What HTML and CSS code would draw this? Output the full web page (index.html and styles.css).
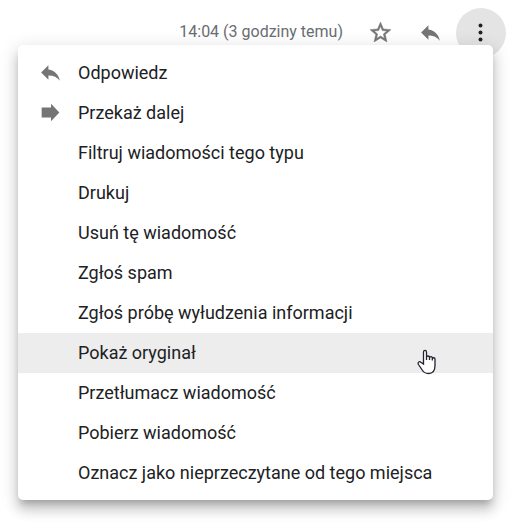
FILE: index.html
```
<!DOCTYPE html>
<html lang="pl">
<head>
  <meta charset="UTF-8">
  <meta name="viewport" content="width=device-width, initial-scale=1.0">
  <title>Wiadomość</title>
  <link rel="stylesheet" href="styles.css">
</head>
<body>
  <div class="message-header">
    <span class="time">14:04 (3 godziny temu)</span>
    <div class="actions">
      <button type="button" class="icon-btn" aria-label="Gwiazdka">
        <svg class="icon star" viewBox="0 0 24 24"><path d="M22 9.24l-7.19-.62L12 2 9.19 8.63 2 9.24l5.46 4.73L5.82 21 12 17.27 18.18 21l-1.63-7.03L22 9.24zM12 15.4l-3.76 2.27 1-4.28-3.32-2.88 4.38-.38L12 6.1l1.71 4.04 4.38.38-3.32 2.88 1 4.28L12 15.4z"/></svg>
      </button>
      <button type="button" class="icon-btn" aria-label="Odpowiedz">
        <svg class="icon" viewBox="0 0 24 24"><path d="M10 9V5l-7 7 7 7v-4.1c5 0 8.5 1.6 11 5.1-1-5-4-10-11-11z"/></svg>
      </button>
      <button type="button" class="icon-btn active" aria-label="Więcej">
        <svg class="icon" viewBox="0 0 24 24"><circle cx="12" cy="5.3" r="1.900"/><circle cx="12" cy="12" r="1.900"/><circle cx="12" cy="18.7" r="1.900"/></svg>
      </button>
    </div>
  </div>

  <div class="menu">
    <button type="button" class="item">
      <svg class="icon" viewBox="0 0 24 24"><path d="M10 9V5l-7 7 7 7v-4.1c5 0 8.5 1.6 11 5.1-1-5-4-10-11-11z"/></svg>
      <span>Odpowiedz</span>
    </button>
    <button type="button" class="item">
      <svg class="icon" viewBox="0 0 24 24"><path d="M3.500 7.300h9V3.500l8 8.500-8 8.500V16.700h-9z"/></svg>
      <span>Przekaż dalej</span>
    </button>
    <button type="button" class="item"><span>Filtruj wiadomości tego typu</span></button>
    <button type="button" class="item"><span>Drukuj</span></button>
    <button type="button" class="item"><span>Usuń tę wiadomość</span></button>
    <button type="button" class="item"><span>Zgłoś spam</span></button>
    <button type="button" class="item"><span>Zgłoś próbę wyłudzenia informacji</span></button>
    <button type="button" class="item hover">
      <span>Pokaż oryginał</span>
      <svg class="cursor" viewBox="0 0 20 26"><path d="M6.500 15V3.200C6.500.8 9.500.8 9.500 3.200V11 8.500c0-2 3-2 3 0V11 9c0-1.800 2.800-1.800 2.800 0v2.500V10c0-1.700 2.700-1.700 2.700 0v6.500c0 5-2.500 8-6.500 8-3 0-4.800-1-6.300-3.500L1.500 15.500c-1.200-2 .8-3.600 2.300-2.300z"/></svg>
    </button>
    <button type="button" class="item"><span>Przetłumacz wiadomość</span></button>
    <button type="button" class="item"><span>Pobierz wiadomość</span></button>
    <button type="button" class="item"><span>Oznacz jako nieprzeczytane od tego miejsca</span></button>
  </div>
</body>
</html>
```
FILE: styles.css
```
body, html {
  margin: 0;
  padding: 0;
  height: 100%;
}
body {
  position: relative;
  overflow: hidden;
  background-color: #fff;
  font-family: Roboto, "Liberation Sans", sans-serif;
  color: #202124;
}
button {
  padding: 0;
  border: none;
  background: none;
  font: inherit;
  color: inherit;
  cursor: pointer;
}
.message-header {
  display: flex;
  justify-content: flex-end;
  align-items: center;
  gap: 13px;
  padding: 8px 7px 0 0;
}
.time {
  padding-bottom: 2px;
  font-size: 16px;
  line-height: 20px;
  color: #6a6d71;
}
.actions {
  display: flex;
}
.icon-btn {
  display: flex;
  justify-content: center;
  align-items: center;
  width: 50px;
  height: 50px;
  padding: 0 2px 2px 0;
  border-radius: 50%;
}
.icon-btn.active {
  background-color: #e4e4e4;
}
.icon {
  flex: none;
  width: 25px;
  height: 25px;
  fill: #757575;
}
.icon.star {
  stroke: #757575;
  stroke-width: .5;
}
.active .icon {
  fill: #202124;
}
/* 下拉菜单 */
.menu {
  position: absolute;
  top: 45px;
  left: 18px;
  right: 20px;
  padding: 8px 0 7px;
  border-radius: 5px;
  background-color: #fff;
  box-shadow: 0 10px 12px 1px rgba(0, 0, 0, .14), 0 4px 18px 2px rgba(0, 0, 0, .12), 0 6px 6px -3px rgba(0, 0, 0, .2);
}
.item {
  position: relative;
  display: flex;
  align-items: center;
  gap: 15px;
  width: 100%;
  height: 40px;
  padding: 0 0 2px 20px;
  font-size: 18px;
  text-align: left;
}
/* 没有图标的项, 文字也要对齐 */
.item span:first-child {
  margin-left: 40px;
}
.item.hover {
  background-color: #ededed;
}
.cursor {
  position: absolute;
  right: 56px;
  top: 16px;
  width: 20px;
  height: 26px;
  fill: #fff;
  stroke: #202030;
  stroke-width: 1.3;
}
```
